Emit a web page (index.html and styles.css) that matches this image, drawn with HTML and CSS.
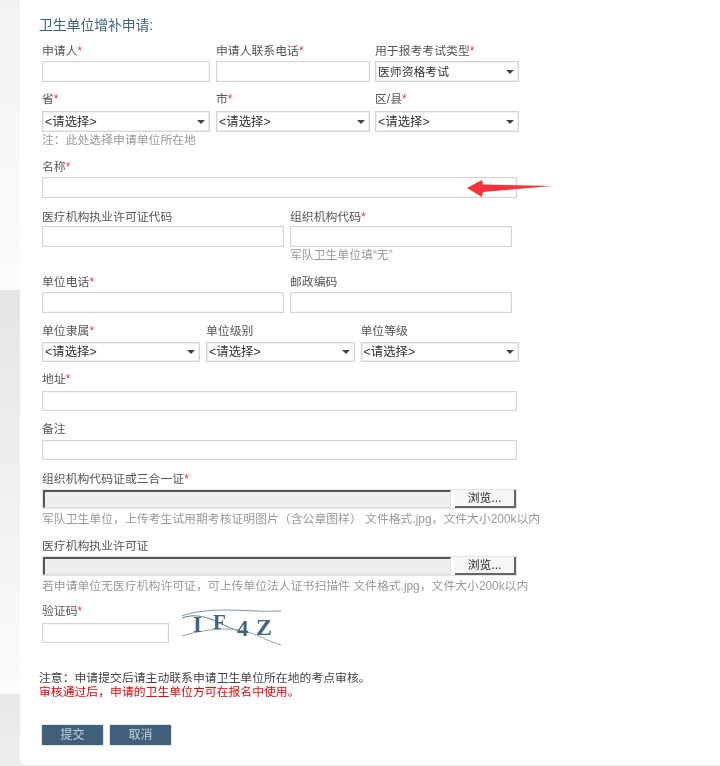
FILE: index.html
```html
<!DOCTYPE html>
<html lang="zh-CN">
<head>
<meta charset="utf-8">
<title>卫生单位增补申请</title>
<link rel="stylesheet" href="styles.css">
</head>
<body>
<div class="side">
  <div class="side-a"></div>
  <div class="side-b"></div>
  <div class="side-c"></div>
</div>
<main class="card">
  <h1 class="title">卫生单位增补申请:</h1>
  <div class="row r1">
    <div class="f w168"><label>申请人<b>*</b></label><div class="inp"></div></div>
    <div class="f w154"><label>申请人联系电话<b>*</b></label><div class="inp"></div></div>
    <div class="f w144"><label>用于报考考试类型<b>*</b></label><div class="sel"><span>医师资格考试</span><i></i></div></div>
  </div>
  <div class="row r2">
    <div class="f w168"><label>省<b>*</b></label><div class="sel"><span class="ph">&lt;请选择&gt;</span><i></i></div></div>
    <div class="f w154"><label>市<b>*</b></label><div class="sel"><span class="ph">&lt;请选择&gt;</span><i></i></div></div>
    <div class="f w144"><label>区/县<b>*</b></label><div class="sel"><span class="ph">&lt;请选择&gt;</span><i></i></div></div>
  </div>
  <p class="hint h1">注：此处选择申请单位所在地</p>
  <div class="f wfull r3"><label>名称<b>*</b></label><div class="inp"></div></div>
  <div class="row r4">
    <div class="f w242"><label>医疗机构执业许可证代码</label><div class="inp"></div></div>
    <div class="f w222"><label>组织机构代码<b>*</b></label><div class="inp"></div><p class="hint">军队卫生单位填“无”</p></div>
  </div>
  <div class="row r5">
    <div class="f w242"><label>单位电话<b>*</b></label><div class="inp"></div></div>
    <div class="f w222"><label>邮政编码</label><div class="inp"></div></div>
  </div>
  <div class="row r6">
    <div class="f w158"><label>单位隶属<b>*</b></label><div class="sel"><span class="ph">&lt;请选择&gt;</span><i></i></div></div>
    <div class="f w148"><label>单位级别</label><div class="sel"><span class="ph">&lt;请选择&gt;</span><i></i></div></div>
    <div class="f w158"><label>单位等级</label><div class="sel"><span class="ph">&lt;请选择&gt;</span><i></i></div></div>
  </div>
  <div class="f wfull r7"><label>地址<b>*</b></label><div class="inp"></div></div>
  <div class="f wfull r8"><label>备注</label><div class="inp"></div></div>
  <div class="f wfull r9"><label>组织机构代码证或三合一证<b>*</b></label>
    <div class="file"><div class="path"></div><div class="browse">浏览...</div></div>
    <p class="hint nowrap">军队卫生单位，上传考生试用期考核证明图片（含公章图样） 文件格式.jpg，文件大小200k以内</p>
  </div>
  <div class="f wfull r10"><label>医疗机构执业许可证</label>
    <div class="file"><div class="path"></div><div class="browse">浏览...</div></div>
    <p class="hint nowrap">若申请单位无医疗机构许可证，可上传单位法人证书扫描件 文件格式.jpg，文件大小200k以内</p>
  </div>
  <div class="captcha-row">
    <div class="f w127"><label>验证码<b>*</b></label><div class="inp"></div></div>
    <svg class="captcha" width="100" height="38" viewBox="0 0 100 38" fill="none">
      <path d="M1 7 C10 3 28 1 45 1 C62 1 82 3 100 2" stroke="#7d95a8" stroke-width="1"/>
      <path d="M1 9 C12 5 22 7 32 11 C42 16 52 20 62 24" stroke="#5f7f98" stroke-width="1"/>
      <path d="M1 27 C14 23 30 20 44 20 C60 20 72 24 82 29 C88 32 94 34 100 36" stroke="#8ea3b4" stroke-width="1"/>
      <text class="cap cap-i" x="12" y="23">I</text>
      <text class="cap cap-f" x="32" y="20">F</text>
      <text class="cap cap-4" x="56" y="27">4</text>
      <text class="cap cap-z" x="75" y="26">Z</text>
    </svg>
  </div>
  <p class="note first">注意：申请提交后请主动联系申请卫生单位所在地的考点审核。</p>
  <p class="note red">审核通过后，申请的卫生单位方可在报名中使用。</p>
  <div class="actions"><button type="button">提交</button><button type="button">取消</button></div>
  <svg class="arrow" width="86" height="19" viewBox="0 0 86 19"><path d="M0 9 L15 1 L16 5.5 L85 7 L16 13 L15 18 Z" fill="#f8323a"/></svg>
</main>
</body>
</html>
```
FILE: styles.css
```css
* { box-sizing: border-box; }
html, body { margin: 0; padding: 0; }
body {
  width: 720px; height: 766px; overflow: hidden; display: flex; background: #ececec;
  font-family: "Liberation Sans", "Noto Sans CJK SC", sans-serif;
  font-size: 11.85px; color: #555;
}
.side { width: 20px; flex: none; display: flex; flex-direction: column; }
.side-a { height: 290px; background: linear-gradient(180deg, #f2f2f2, #fbfbfb); }
.side-b { height: 404px; background: linear-gradient(180deg, #e5e5e5, #fbfbfb); }
.side-c { flex: 1; background: linear-gradient(180deg, #e8e8e8, #eeeeee); }
.card {
  position: relative; width: 700px; height: 765px; background: #fff;
  border-bottom-left-radius: 6px; padding: 18px 0 0 19px;
  filter: blur(0.35px);
}
.title { margin: 0; font-size: 13.8px; line-height: 16px; font-weight: 400; color: #3f6380; }
.row { display: flex; padding-left: 3px; }
.f label { display: block; font-size: 11.85px; line-height: 14px; padding-top: 2px; color: #555; margin-bottom: 3px; }
.f label b { font-weight: 400; color: #f33; }
.inp { height: 21px; border: 1px solid #d4d4d4; background: #fff; box-shadow: inset 0 0 0 1px #f6f6f6; }
.sel {
  height: 21px; border: 1px solid #d4d4d4; background: #fff; display: flex; align-items: center;
  justify-content: space-between; padding: 0 4px 2px 2px; color: #333; font-size: 11.85px;
  box-shadow: inset 0 0 0 1px #efefef;
}
.sel .ph { font-size: 12.4px; }
.sel i { width: 0; height: 0; margin-top: 2px; border-left: 4px solid transparent; border-right: 4px solid transparent; border-top: 4px solid #444; }
.hint { margin: 0; font-size: 11.85px; line-height: 16px; color: #999; }
.nowrap { white-space: nowrap; margin-top: 2px; }
.w168 { width: 168px; margin-right: 6px; }
.w154 { width: 154px; margin-right: 5px; }
.w144 { width: 144px; }
.w242 { width: 242px; margin-right: 6px; }
.w222 { width: 222px; }
.w158 { width: 158px; margin-right: 6px; }
.w148 { width: 148.5px; margin-right: 6px; }
.w127 { width: 127px; }
.wfull { width: 475px; margin-left: 3px; }
.r1 { margin-top: 8px; }
.r2 { margin-top: 8px; }
.r2 label { margin-bottom: 5px; }
.h1 { margin: 0 0 0 3px; }
.r3 { margin-top: 10px; }
.r4 { margin-top: 10px; }
.r4 label { margin-bottom: 2px; }
.r5 { margin-top: 10px; }
.r6 { margin-top: 9px; }
.r6 label { margin-bottom: 4px; }
.r6 .sel, .r7 .inp, .r8 .inp, .captcha-row .inp { height: 20px; }
.r7 { margin-top: 8px; }
.r7 label { margin-bottom: 5px; }
.r8 { margin-top: 9px; }
.r8 label { margin-bottom: 4px; }
.r9 { margin-top: 10px; }
.file { display: flex; height: 20px; border: 1px solid #e2e2e2; }
.path { flex: 1; background: #eee; border-top: 2px solid #555; border-left: 2px solid #555; border-right: 1px solid #ddd; border-bottom: 1px solid #ddd; }
.browse {
  width: 61px; margin-left: 4px; text-align: center; font-size: 11.85px; line-height: 17px; color: #222; background: #f6f6f6;
  border-right: 2px solid #666; border-bottom: 2px solid #666;
}
.r10 { margin-top: 10px; }
.captcha-row { display: flex; margin: 8px 0 0 3px; align-items: flex-start; }
.captcha-row label { margin-bottom: 5px; }
.captcha { margin: 7px 0 0 12px; }
.cap { font-family: "Liberation Serif", serif; font-weight: 700; fill: #3f6380; }
.cap-i { font-size: 23px; }
.cap-f { font-size: 21px; }
.cap-4 { font-size: 23px; }
.cap-z { font-size: 24px; }
.note { margin: 0; line-height: 14px; font-size: 11.85px; color: #444; }
.first { margin-top: 24px; }
.red { color: #f00; }
.actions { display: flex; gap: 5px; margin: 25px 0 0 2px; }
.actions button {
  width: 63px; height: 22px; border: 1px solid #dde3e8; border-radius: 2px; background: #3f5f7a; color: #c9d4de;
  font: 12px/18px "Liberation Sans", "Noto Sans CJK SC", sans-serif; padding: 0;
}
.arrow { position: absolute; left: 447px; top: 179px; }
```
